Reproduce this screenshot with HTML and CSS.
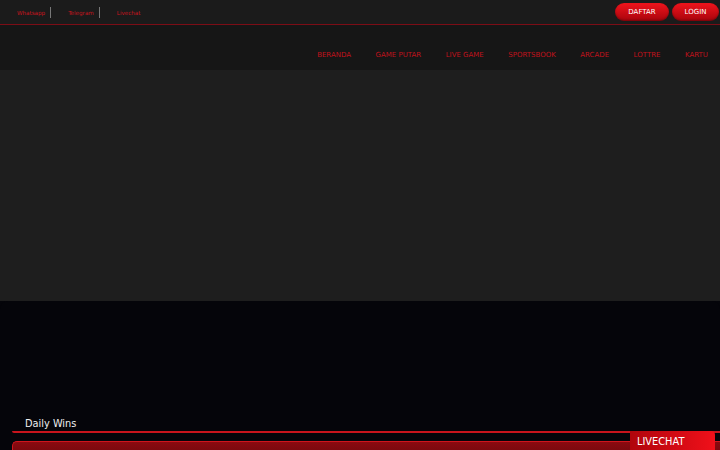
FILE: index.html
```html
<!DOCTYPE html>
<html>
<head>
    <title>Beranda</title>
    <link rel="stylesheet" href="styles.css">
</head>
<body>
    <div class="topbar">
        <div class="contact-links">
            <a href="#">Whatsapp</a>
            <span class="sep"></span>
            <a href="#">Telegram</a>
            <span class="sep"></span>
            <a href="#">Livechat</a>
        </div>
        <div class="auth">
            <a class="btn" href="#">DAFTAR</a>
            <a class="btn" href="#">LOGIN</a>
        </div>
    </div>

    <div class="navbar">
        <a href="#">BERANDA</a>
        <a href="#">GAME PUTAR</a>
        <a href="#">LIVE GAME</a>
        <a href="#">SPORTSBOOK</a>
        <a href="#">ARCADE</a>
        <a href="#">LOTTRE</a>
        <a href="#">KARTU</a>
    </div>

    <div class="banner"></div>

    <div class="content">
        <div class="wins">
            <h4>Daily Wins</h4>
            <div class="wins-list"></div>
        </div>
    </div>

    <a class="livechat" href="#">LIVECHAT</a>
</body>
</html>
```

FILE: styles.css
```css
body {
    font-family: "DejaVu Sans", Verdana, sans-serif;
    background-color: #05050a;
    margin: 0;
    padding: 0;
    height: 450px;
    overflow: hidden;
}
a {
    text-decoration: none;
}
.topbar {
    height: 24px;
    background-color: #1b1b1b;
    border-bottom: 1px solid #7c0d16;
    display: flex;
    align-items: center;
    justify-content: space-between;
    padding: 0 1px 0 17px;
}
.contact-links {
    display: flex;
    align-items: center;
    gap: 5px;
    padding-top: 1px;
}
.contact-links a {
    color: #c8141e;
    font-size: 5.6px;
}
.sep {
    width: 1px;
    height: 11px;
    background-color: #777;
}
.contact-links .sep + a {
    margin-left: 12px;
}
.auth {
    display: flex;
    gap: 3px;
}
.btn {
    display: flex;
    align-items: center;
    justify-content: center;
    height: 18px;
    width: 54px;
    border-radius: 9px;
    background: linear-gradient(to bottom, #f0141c, #a8040c);
    color: #fff;
    font-size: 7px;
    box-shadow: inset 0 -1px 2px rgba(0, 0, 0, 0.3);
}
.btn + .btn {
    width: 47px;
}
.navbar {
    height: 45px;
    background-color: #161616;
    display: flex;
    justify-content: flex-end;
    align-items: center;
    gap: 24.5px;
    padding: 14px 12px 0 0;
    box-sizing: border-box;
}
.navbar a {
    color: #c0121c;
    font-size: 7px;
}
.banner {
    height: 231px;
    background-color: #1e1e1e;
}
.content {
    background-color: #05050a;
    border-radius: 8px 8px 0 0;
    height: 150px;
    padding: 0 0 0 12px;
}
.wins {
    padding-top: 117px;
}
.wins h4 {
    margin: 0;
    padding: 0 0 2px 13px;
    color: #f0f0f0;
    font-weight: normal;
    font-size: 9.8px;
    border-bottom: 2px solid #c8141c;
    border-radius: 0 0 0 2px;
}
.wins-list {
    margin-top: 8px;
    height: 30px;
    border-radius: 5px 0 0 0;
    border-left: 1px solid #d0141c;
    border-top: 1px solid #d0141c;
    background: linear-gradient(to bottom, #8a0a10, #5a0408);
}
.livechat {
    position: fixed;
    left: 630px;
    top: 431px;
    width: 85px;
    height: 30px;
    padding: 5px 0 0 7px;
    box-sizing: border-box;
    border-radius: 0 4px 0 0;
    background: linear-gradient(to right, #b0050c, #f0101a);
    color: #fff;
    font-size: 9.8px;
}
```
